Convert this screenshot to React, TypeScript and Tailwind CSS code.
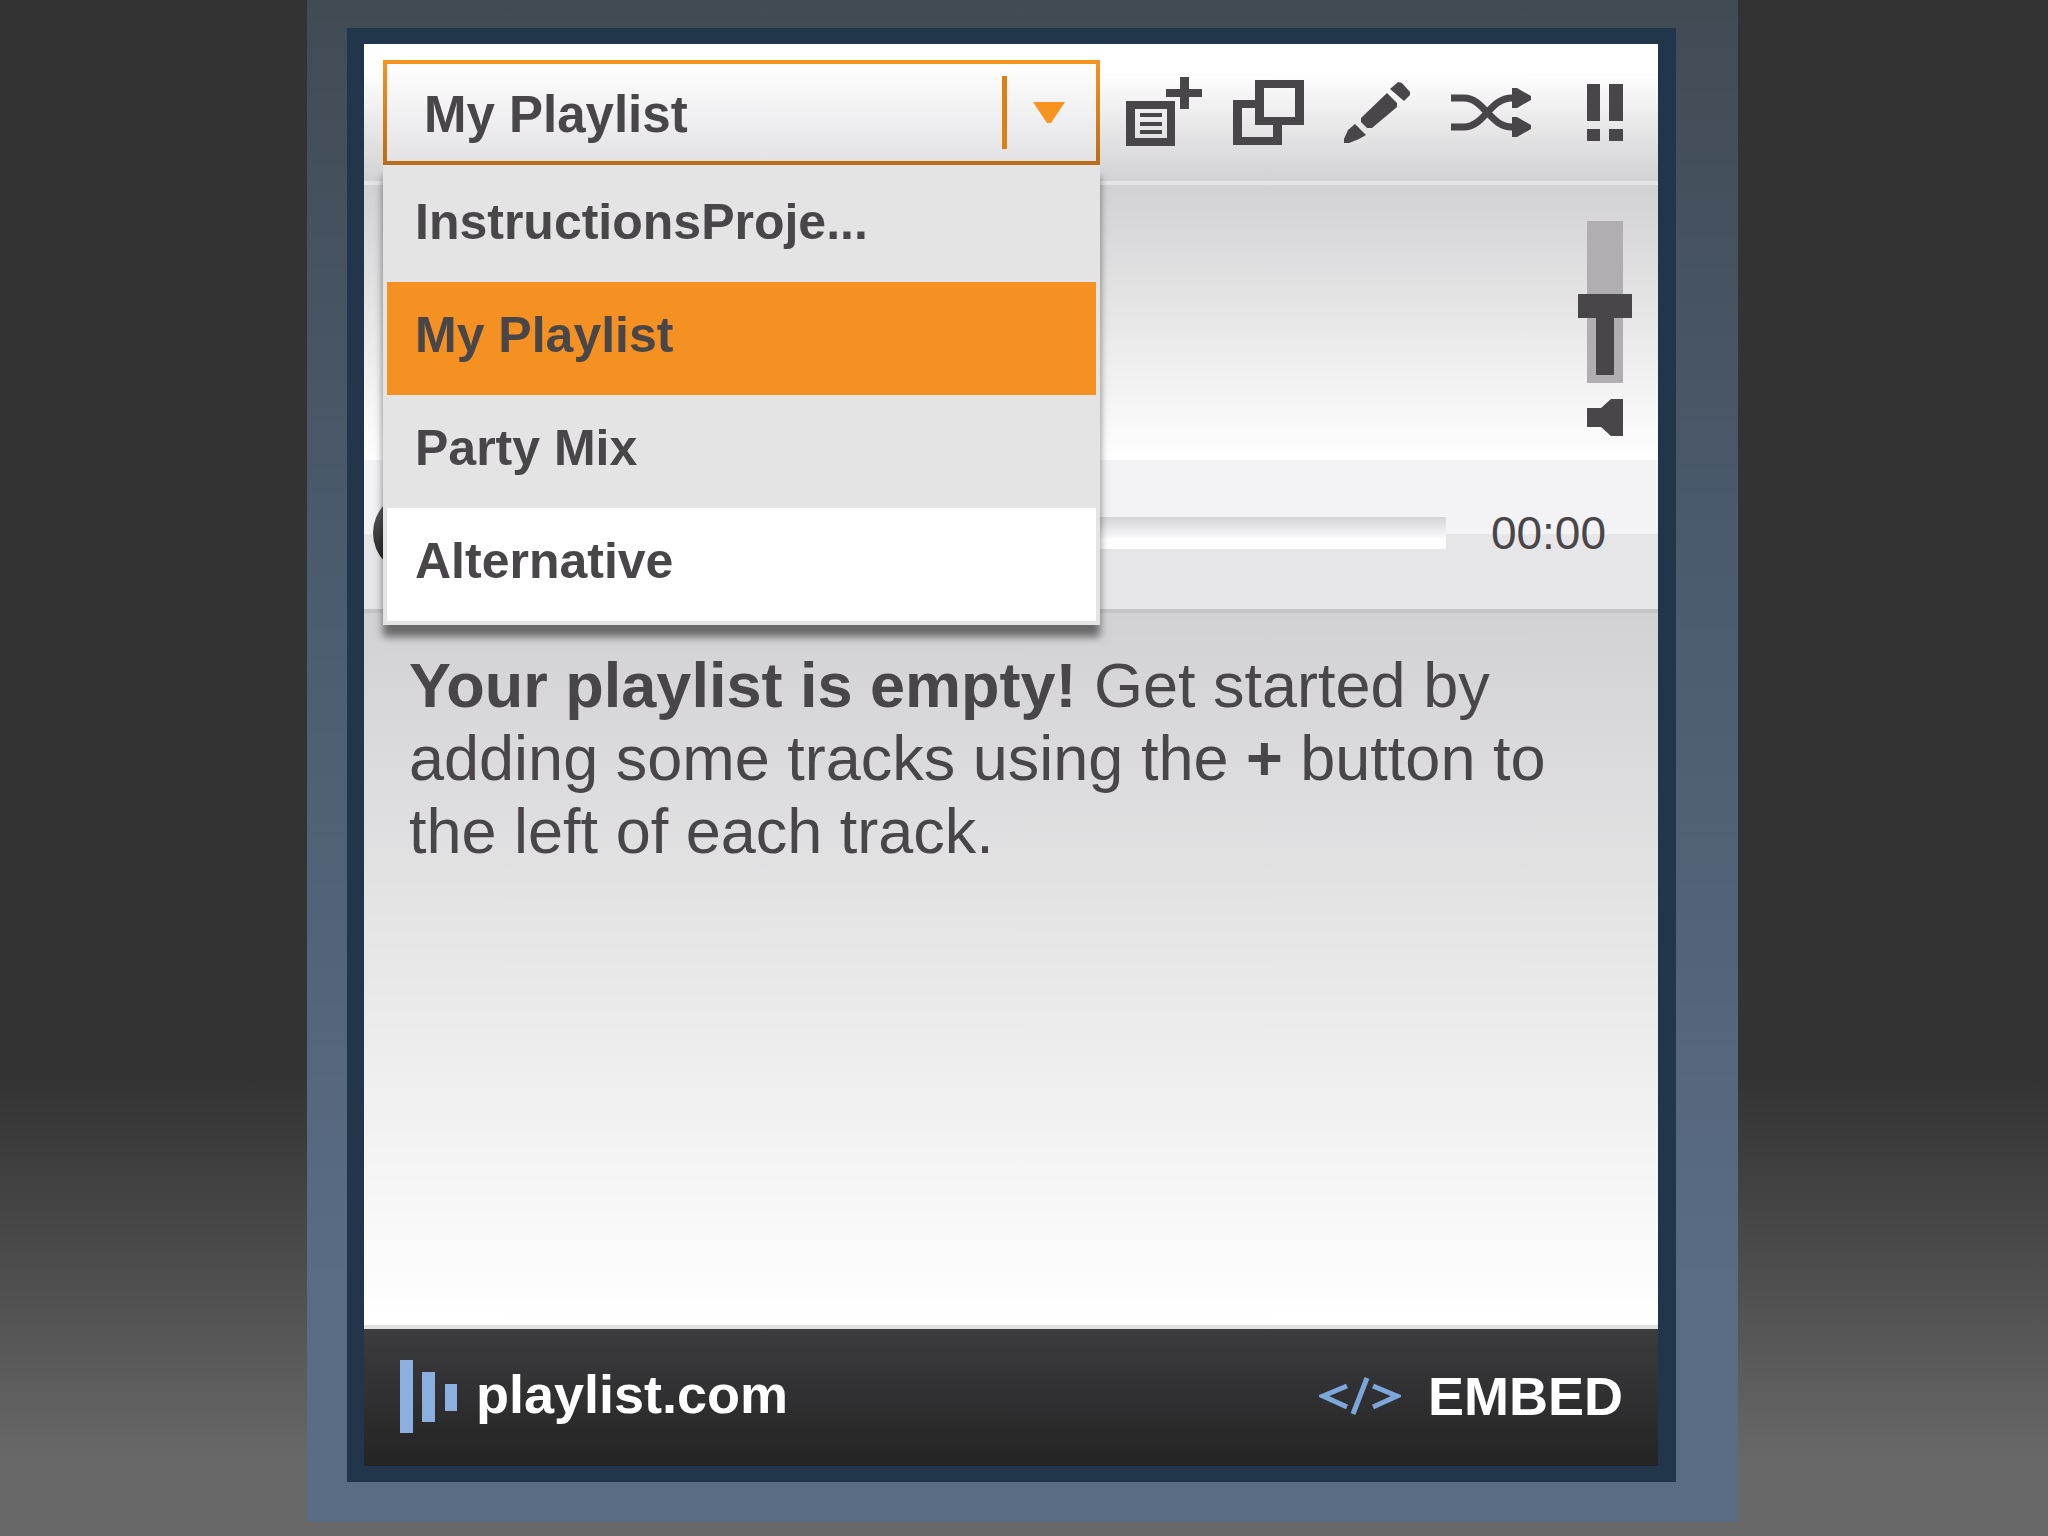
import React, { useState } from "react";

const playlists = ["InstructionsProje...", "My Playlist", "Party Mix", "Alternative"];

function AddPlaylistIcon() {
  return (
    <svg width="76" height="72" viewBox="0 0 76 72" fill="currentColor" aria-hidden="true">
      <path fillRule="evenodd" d="M0 24h49v45H0zM9 32v29h32V32z" />
      <path d="M14 36h22v4H14zM14 45h22v4H14zM14 53h22v4H14z" />
      <path d="M54 0h9v12h13v8H63v12h-9V20H40v-8h14z" />
    </svg>
  );
}

function DuplicateIcon() {
  return (
    <svg width="72" height="66" viewBox="0 0 72 66" fill="currentColor" aria-hidden="true">
      <path fillRule="evenodd" d="M22 0h49v45H22zM31 8v29h31V8z" />
      <path d="M0 20h22v8H9v29h31V45h9v20H0z" />
    </svg>
  );
}

function PencilIcon() {
  return (
    <svg width="70" height="64" viewBox="0 0 70 64" fill="currentColor" aria-hidden="true">
      <path d="M56 1l4 1 8 9v3l-6 6-14-12z" />
      <path d="M45 12l10 10v4L30 47h-5l-6-6v-4z" />
      <path d="M13 43l11 11-7 4-10 4H2v-4l4-9z" />
    </svg>
  );
}

function ShuffleIcon() {
  return (
    <svg width="82" height="50" viewBox="0 0 82 50" aria-hidden="true">
      <g fill="none" stroke="currentColor" strokeWidth="7">
        <path d="M1 10h13c20 0 26 29 48 29h5" />
        <path d="M1 39h13c20 0 26-29 48-29h5" />
      </g>
      <path d="M62 0h5l14 8v4l-14 8h-5zM62 29h5l14 8v4l-14 8h-5z" fill="currentColor" />
    </svg>
  );
}

function AlertIcon() {
  return (
    <svg width="36" height="58" viewBox="0 0 36 58" fill="currentColor" aria-hidden="true">
      <path d="M0 0h13v37H0zM22 0h14v37H22zM0 45h13v12H0zM22 45h14v12H22z" />
    </svg>
  );
}

const tools = [
  { label: "Add playlist", Icon: AddPlaylistIcon, spacing: "ml-[26px]" },
  { label: "Duplicate playlist", Icon: DuplicateIcon, spacing: "ml-[31px]" },
  { label: "Edit playlist", Icon: PencilIcon, spacing: "ml-[37px]" },
  { label: "Shuffle", Icon: ShuffleIcon, spacing: "ml-[38px]" },
  { label: "Report a problem", Icon: AlertIcon, spacing: "ml-[55px]" },
];

export default function App() {
  const [open, setOpen] = useState(true);
  const [selected, setSelected] = useState("My Playlist");
  const [volume, setVolume] = useState(50);

  return (
    <div className="min-h-screen flex flex-col pl-[307px] pr-[310px] pb-[14px] bg-linear-to-b from-[#333333] from-70% to-[#686868] to-95% font-['Liberation_Sans',Arial,sans-serif] text-[#484648]">
      <div className="flex-1 flex flex-col pt-7 pl-10 pr-[62px] pb-10 bg-linear-to-b from-[#414b54] via-[#4c5c70] via-40% to-[#5a6c84] to-85%">
        <main className="flex-1 flex flex-col border-y-16 border-l-17 border-r-18 border-[#22364b]">
          {/* Toolbar */}
          <header className="flex pt-4 pb-4 pl-[19px] pr-[35px] bg-linear-to-b from-white from-20% to-[#d2d1d3] border-b-4 border-[#e6e5e7]">
            <div className="relative flex-1">
              <button
                onClick={() => setOpen(!open)}
                aria-haspopup="listbox"
                aria-expanded={open}
                className="w-full h-[105px] p-1 bg-linear-to-b from-[#f7941f] to-[#b86d1a]"
              >
                <span className="h-full flex items-center pl-[37px] pr-[31px] bg-linear-to-b from-white to-[#e3e2e5]">
                  <span className="flex-1 pt-1 text-left text-[51px] leading-[60px] font-bold">{selected}</span>
                  <span className="w-[5px] h-[73px] bg-[#d98114]" />
                  <svg width="32" height="22" viewBox="0 0 32 22" className="ml-[26px]" aria-hidden="true">
                    <path d="M0 0h32L18 21h-4z" fill="#f7941f" />
                  </svg>
                </span>
              </button>
              {open && (
                <ul
                  role="listbox"
                  aria-label="Playlists"
                  className="absolute top-full left-0 z-10 w-full p-1 bg-[#e4e4e4] shadow-[0_12px_8px_rgba(0,0,0,0.5)]"
                >
                  {playlists.map((name) => (
                    <li key={name} role="option" aria-selected={name === selected}>
                      <button
                        onClick={() => setSelected(name)}
                        className={`w-full h-[113px] pl-7 pb-2 text-left text-[50px] leading-[60px] font-bold ${
                          name === selected ? "bg-[#f59122]" : name === "Alternative" ? "bg-white" : "bg-[#e4e4e4]"
                        }`}
                      >
                        {name}
                      </button>
                    </li>
                  ))}
                </ul>
              )}
            </div>
            {tools.map(({ label, Icon, spacing }) => (
              <button key={label} aria-label={label} className={`${spacing} flex items-center`}>
                <Icon />
              </button>
            ))}
          </header>

          {/* Now playing */}
          <section className="h-[275px] flex flex-col items-end pt-9 pr-[26px] bg-linear-to-b from-[#d2d1d3] to-white">
            <div className="relative w-[54px] h-[162px] px-[9px]">
              <div className="h-full pt-[73px] bg-[#b0aeb0]">
                <div className="h-[24px] -mx-[9px] bg-[#484648]" />
                <div className="h-[57px] mx-[9px] bg-[#484648]" />
              </div>
              <input
                type="range"
                aria-label="Volume"
                value={volume}
                onChange={(e) => setVolume(Number(e.target.value))}
                className="absolute inset-0 w-full h-full opacity-0 [writing-mode:vertical-lr] [direction:rtl]"
              />
            </div>
            <button aria-label="Mute" className="mt-4 mr-[9px]">
              <svg width="36" height="38" viewBox="0 0 36 38" fill="currentColor" aria-hidden="true">
                <path d="M0 9h14L24 0h12v37H24L14 28H0z" />
              </svg>
            </button>
          </section>

          {/* Player */}
          <section className="h-[153px] flex items-center pb-1 pl-[9px] pr-[52px] bg-linear-to-b from-[#f3f2f4] from-50% to-[#e6e5e7] to-50% border-b-4 border-[#c4c3c5]">
            <button aria-label="Play" className="w-[82px] h-[82px] rounded-full bg-linear-to-b from-[#6a6a6a] to-[#1c1c1c] flex items-center justify-center">
              <svg width="30" height="34" viewBox="0 0 30 34" aria-hidden="true">
                <path d="M4 0l26 17L4 34z" fill="#fff" />
              </svg>
            </button>
            <input
              type="range"
              aria-label="Track position"
              defaultValue={0}
              className="flex-1 h-8 ml-7 appearance-none bg-linear-to-b from-[#d4d3d5] via-[#f3f2f4] via-55% to-white to-70% [&::-webkit-slider-thumb]:appearance-none"
            />
            <span className="ml-[45px] text-[46px] leading-[50px]">00:00</span>
          </section>

          {/* Track list */}
          <section className="flex-1 pt-9 px-[45px] bg-linear-to-b from-[#d2d1d3] to-white border-b-4 border-[#e0e0e0]">
            <p className="text-[63px] leading-[73px]">
              <strong>Your playlist is empty!</strong> Get started by adding some tracks using the <strong>+</strong> button to the left of each track.
            </p>
          </section>

          <footer className="h-[137px] flex items-center justify-between pl-9 pr-[35px] bg-linear-to-b from-[#3c3b3d] to-[#252425] text-white text-[54px] leading-[60px] font-bold">
            <a href="#" className="flex items-center gap-[18px]">
              <svg width="58" height="76" viewBox="0 0 58 76" fill="#8bb0e0" aria-hidden="true">
                <path d="M0 0h13v73H0zM22 12h13v50H22zM45 24h12v27H45z" />
              </svg>
              <span className="pb-2">playlist.com</span>
            </a>
            <button className="flex items-center gap-[27px] pb-1">
              <svg width="82" height="38" viewBox="0 0 82 38" fill="none" stroke="#7ba7dc" strokeWidth="5" aria-hidden="true">
                <path d="M28 9L4 19l24 11M54 9l24 10-24 11M48 1L34 37" />
              </svg>
              EMBED
            </button>
          </footer>
        </main>
      </div>
    </div>
  );
}
